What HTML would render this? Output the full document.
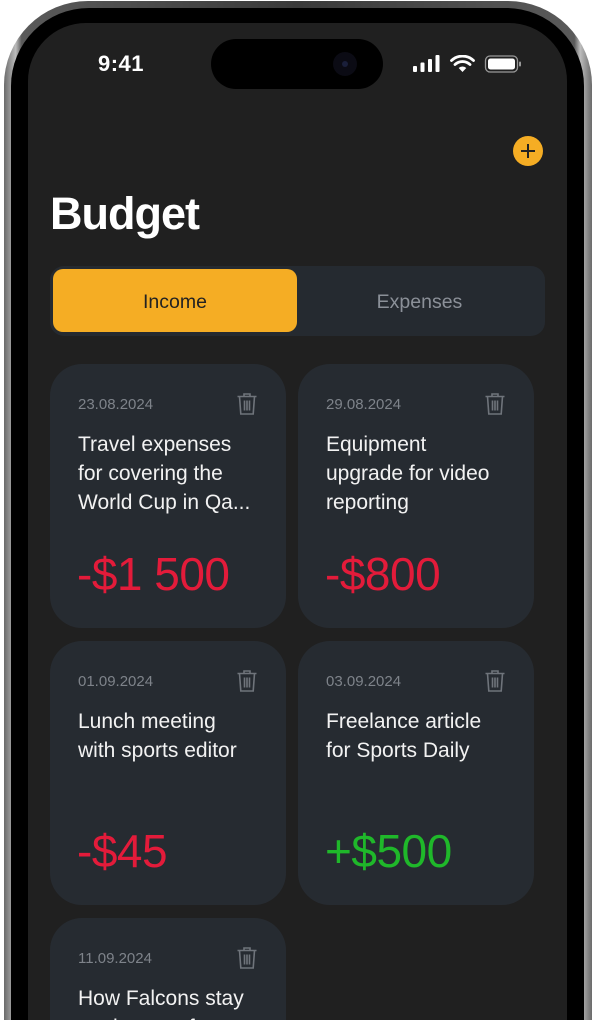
<!DOCTYPE html>
<html><head><meta charset="utf-8"><style>
*{margin:0;padding:0;box-sizing:border-box}
html,body{width:595px;height:1020px;overflow:hidden;background:#fff;font-family:"Liberation Sans",sans-serif}
.wrap{position:relative;width:595px;height:1020px;overflow:hidden}
.rim{position:absolute;left:4px;top:1px;width:588px;height:1019px;border-radius:84px 84px 0 0;background:linear-gradient(90deg,#6a6a6a,#bdbdbd 2%,#5a5a5a 3%,#3a3a3a 50%,#5a5a5a 97%,#bdbdbd 98%,#6a6a6a)}
.bezel{position:absolute;left:11px;top:8px;width:573px;height:1012px;border-radius:78px 78px 0 0;background:#000}
.screen{position:absolute;left:28px;top:23px;width:539px;height:997px;border-radius:58px 58px 0 0;background:#202020;overflow:hidden}
.island{position:absolute;left:183px;top:16px;width:172px;height:50px;border-radius:25px;background:#000}
.cam{position:absolute;left:122px;top:13px;width:24px;height:24px;border-radius:50%;background:#0b0b14}
.cam:after{content:"";position:absolute;left:9px;top:9px;width:6px;height:6px;border-radius:50%;background:#1a1f3a}
.time{position:absolute;left:70px;top:28px;color:#fff;font-size:22px;font-weight:bold;letter-spacing:.5px}
.plus{position:absolute;left:485px;top:113px;width:30px;height:30px;border-radius:50%;background:#f5ad24}
.h1{position:absolute;left:22px;top:165px;color:#fff;font-size:45px;font-weight:bold;letter-spacing:-1px}
.seg{position:absolute;left:22px;top:243px;width:495px;height:70px;border-radius:14px;background:#252a30}
.pill{position:absolute;left:3px;top:3px;width:244px;height:63px;border-radius:10px;background:#f5ad24;color:#222;font-size:19.5px;text-align:center;line-height:66px}
.exp{position:absolute;left:247px;top:3px;width:245px;line-height:66px;text-align:center;color:#8b9098;font-size:19.5px}
.card{position:absolute;width:236px;height:264px;border-radius:32px;background:#262b31}
.date{position:absolute;left:28px;top:32px;color:#7e838a;font-size:15px}
.trash{position:absolute;left:186px;top:28px}
.txt{position:absolute;left:28px;top:66px;white-space:nowrap;color:#f2f2f2;font-size:21px;line-height:29px}
.amt{position:absolute;left:27px;top:183px;font-size:46px;letter-spacing:-.5px}
.red{color:#e31b3a}.green{color:#1fb82a}
</style></head><body><div class="wrap">
<div class="rim"></div><div class="bezel"></div>
<div class="screen">
 <div class="island"><div class="cam"></div></div>
 <div class="time">9:41</div>
 <svg style="position:absolute;left:385px;top:32px" width="110" height="20" viewBox="0 0 110 20">
  <rect x="0" y="11" width="4" height="6" rx="1" fill="#fff"/><rect x="7.5" y="7.5" width="4" height="9.5" rx="1" fill="#fff"/><rect x="15" y="4" width="4" height="13" rx="1" fill="#fff"/><rect x="22.5" y="0" width="4" height="17" rx="1" fill="#fff"/>
  <path d="M49.5 17 L53.3 13 A5.5 5.5 0 0 0 45.7 13 Z" fill="#fff"/>
  <path d="M42 9.5 A11 11 0 0 1 57 9.5" stroke="#fff" stroke-width="2.8" fill="none" stroke-linecap="round"/>
  <path d="M38.5 5.5 A16 16 0 0 1 60.5 5.5" stroke="#fff" stroke-width="2.8" fill="none" stroke-linecap="round"/>
  <rect x="72.5" y="1" width="32" height="16" rx="4.5" stroke="#999" stroke-width="1.3" fill="none"/>
  <rect x="75" y="3.5" width="27" height="11" rx="2.5" fill="#fff"/>
  <rect x="106" y="6.5" width="2" height="5" rx="1" fill="#999"/>
 </svg>
 <div class="plus"><svg width="30" height="30"><path d="M15 8V22M8 15H22" stroke="#222" stroke-width="2"/></svg></div>
 <div class="h1">Budget</div>
 <div class="seg"><div class="pill">Income</div><div class="exp">Expenses</div></div>

 <div class="card" style="left:22px;top:341px"><div class="date">23.08.2024</div><div class="txt">Travel expenses<br>for covering the<br>World Cup in Qa...</div><div class="amt red">-$1 500</div>
 <svg class="trash" width="22" height="24" viewBox="0 0 22 24" fill="none" stroke="#6f747b" stroke-width="1.6"><path d="M1.5 4.5H20.5"/><path d="M8 4.5V2H14V4.5"/><path d="M3.5 4.5L4.8 22H17.2L18.5 4.5"/><path d="M8.5 8.5V18.5M11 8.5V18.5M13.5 8.5V18.5"/></svg></div>
 <div class="card" style="left:270px;top:341px"><div class="date">29.08.2024</div><div class="txt">Equipment<br>upgrade for video<br>reporting</div><div class="amt red">-$800</div>
 <svg class="trash" width="22" height="24" viewBox="0 0 22 24" fill="none" stroke="#6f747b" stroke-width="1.6"><path d="M1.5 4.5H20.5"/><path d="M8 4.5V2H14V4.5"/><path d="M3.5 4.5L4.8 22H17.2L18.5 4.5"/><path d="M8.5 8.5V18.5M11 8.5V18.5M13.5 8.5V18.5"/></svg></div>
 <div class="card" style="left:22px;top:618px"><div class="date">01.09.2024</div><div class="txt">Lunch meeting<br>with sports editor</div><div class="amt red">-$45</div>
 <svg class="trash" width="22" height="24" viewBox="0 0 22 24" fill="none" stroke="#6f747b" stroke-width="1.6"><path d="M1.5 4.5H20.5"/><path d="M8 4.5V2H14V4.5"/><path d="M3.5 4.5L4.8 22H17.2L18.5 4.5"/><path d="M8.5 8.5V18.5M11 8.5V18.5M13.5 8.5V18.5"/></svg></div>
 <div class="card" style="left:270px;top:618px"><div class="date">03.09.2024</div><div class="txt">Freelance article<br>for Sports Daily</div><div class="amt green">+$500</div>
 <svg class="trash" width="22" height="24" viewBox="0 0 22 24" fill="none" stroke="#6f747b" stroke-width="1.6"><path d="M1.5 4.5H20.5"/><path d="M8 4.5V2H14V4.5"/><path d="M3.5 4.5L4.8 22H17.2L18.5 4.5"/><path d="M8.5 8.5V18.5M11 8.5V18.5M13.5 8.5V18.5"/></svg></div>
 <div class="card" style="left:22px;top:895px;height:102px;border-radius:32px 32px 0 0"><div class="date">11.09.2024</div><div class="txt">How Falcons stay<br>on the top of t</div>
 <svg class="trash" width="22" height="24" viewBox="0 0 22 24" fill="none" stroke="#6f747b" stroke-width="1.6"><path d="M1.5 4.5H20.5"/><path d="M8 4.5V2H14V4.5"/><path d="M3.5 4.5L4.8 22H17.2L18.5 4.5"/><path d="M8.5 8.5V18.5M11 8.5V18.5M13.5 8.5V18.5"/></svg></div>
</div>
</div></body></html>
